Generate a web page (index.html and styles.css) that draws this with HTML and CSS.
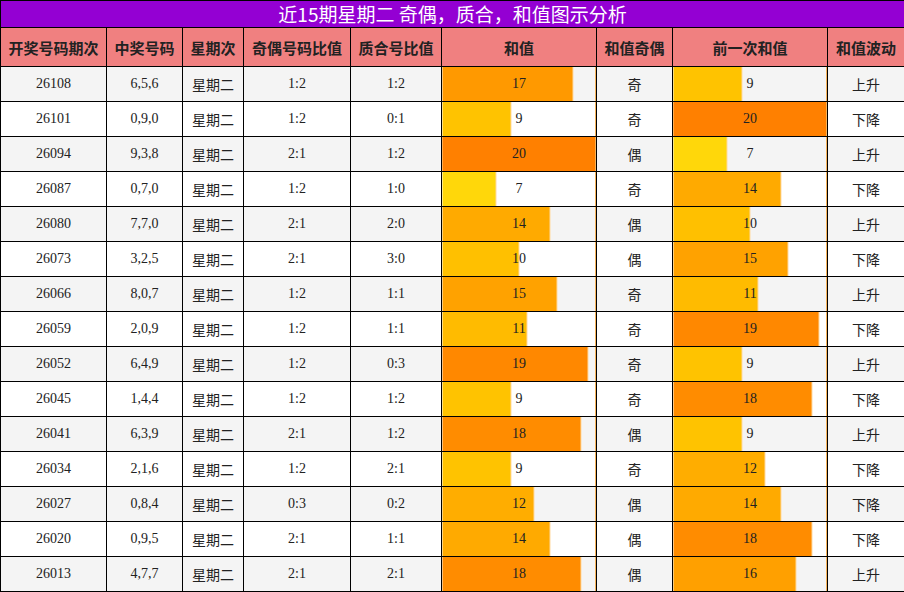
FILE: index.html
```html
<!DOCTYPE html>
<html lang="zh">
<head>
<meta charset="utf-8">
<title>近15期星期二 奇偶，质合，和值图示分析</title>
<link rel="stylesheet" href="styles.css">
</head>
<body>
<table class="grid">
  <colgroup>
    <col class="w1"><col class="w2"><col class="w3"><col class="w4"><col class="w5"><col class="w6"><col class="w7"><col class="w8"><col class="w9">
  </colgroup>
  <thead>
    <tr class="title-row"><th colspan="9" class="title">近15期星期二 奇偶，质合，和值图示分析</th></tr>
    <tr class="head-row">
      <th>开奖号码期次</th><th>中奖号码</th><th>星期次</th><th>奇偶号码比值</th><th>质合号比值</th><th>和值</th><th>和值奇偶</th><th>前一次和值</th><th>和值波动</th>
    </tr>
  </thead>
  <tbody>
    <tr><td>26108</td><td>6,5,6</td><td>星期二</td><td>1:2</td><td>1:2</td><td class="bar c17" style="--w:85%">17</td><td>奇</td><td class="bar c9" style="--w:45%">9</td><td>上升</td></tr>
    <tr><td>26101</td><td>0,9,0</td><td>星期二</td><td>1:2</td><td>0:1</td><td class="bar c9" style="--w:45%">9</td><td>奇</td><td class="bar c20" style="--w:100%">20</td><td>下降</td></tr>
    <tr><td>26094</td><td>9,3,8</td><td>星期二</td><td>2:1</td><td>1:2</td><td class="bar c20" style="--w:100%">20</td><td>偶</td><td class="bar c7" style="--w:35%">7</td><td>上升</td></tr>
    <tr><td>26087</td><td>0,7,0</td><td>星期二</td><td>1:2</td><td>1:0</td><td class="bar c7" style="--w:35%">7</td><td>奇</td><td class="bar c14" style="--w:70%">14</td><td>下降</td></tr>
    <tr><td>26080</td><td>7,7,0</td><td>星期二</td><td>2:1</td><td>2:0</td><td class="bar c14" style="--w:70%">14</td><td>偶</td><td class="bar c10" style="--w:50%">10</td><td>上升</td></tr>
    <tr><td>26073</td><td>3,2,5</td><td>星期二</td><td>2:1</td><td>3:0</td><td class="bar c10" style="--w:50%">10</td><td>偶</td><td class="bar c15" style="--w:75%">15</td><td>下降</td></tr>
    <tr><td>26066</td><td>8,0,7</td><td>星期二</td><td>1:2</td><td>1:1</td><td class="bar c15" style="--w:75%">15</td><td>奇</td><td class="bar c11" style="--w:55%">11</td><td>上升</td></tr>
    <tr><td>26059</td><td>2,0,9</td><td>星期二</td><td>1:2</td><td>1:1</td><td class="bar c11" style="--w:55%">11</td><td>奇</td><td class="bar c19" style="--w:95%">19</td><td>下降</td></tr>
    <tr><td>26052</td><td>6,4,9</td><td>星期二</td><td>1:2</td><td>0:3</td><td class="bar c19" style="--w:95%">19</td><td>奇</td><td class="bar c9" style="--w:45%">9</td><td>上升</td></tr>
    <tr><td>26045</td><td>1,4,4</td><td>星期二</td><td>1:2</td><td>1:2</td><td class="bar c9" style="--w:45%">9</td><td>奇</td><td class="bar c18" style="--w:90%">18</td><td>下降</td></tr>
    <tr><td>26041</td><td>6,3,9</td><td>星期二</td><td>2:1</td><td>1:2</td><td class="bar c18" style="--w:90%">18</td><td>偶</td><td class="bar c9" style="--w:45%">9</td><td>上升</td></tr>
    <tr><td>26034</td><td>2,1,6</td><td>星期二</td><td>1:2</td><td>2:1</td><td class="bar c9" style="--w:45%">9</td><td>奇</td><td class="bar c12" style="--w:60%">12</td><td>下降</td></tr>
    <tr><td>26027</td><td>0,8,4</td><td>星期二</td><td>0:3</td><td>0:2</td><td class="bar c12" style="--w:60%">12</td><td>偶</td><td class="bar c14" style="--w:70%">14</td><td>下降</td></tr>
    <tr><td>26020</td><td>0,9,5</td><td>星期二</td><td>2:1</td><td>1:1</td><td class="bar c14" style="--w:70%">14</td><td>偶</td><td class="bar c18" style="--w:90%">18</td><td>下降</td></tr>
    <tr><td>26013</td><td>4,7,7</td><td>星期二</td><td>2:1</td><td>2:1</td><td class="bar c18" style="--w:90%">18</td><td>偶</td><td class="bar c16" style="--w:80%">16</td><td>上升</td></tr>
  </tbody>
</table>
</body>
</html>
```
FILE: styles.css
```css
html, body {
  margin: 0;
  padding: 0;
  background: #ffffff;
}

.grid {
  width: 904px;
  border-collapse: collapse;
  table-layout: fixed;
  font-family: "Liberation Serif", "Noto Sans CJK SC", serif;
  font-size: 14px;
  color: #222222;
}

.w1 { width: 106px; }
.w2 { width: 76px; }
.w3 { width: 61px; }
.w4 { width: 107px; }
.w5 { width: 91px; }
.w6 { width: 155px; }
.w7 { width: 76px; }
.w8 { width: 155px; }
.w9 { width: 77px; }

.grid th,
.grid td {
  border: 1px solid #000000;
  padding: 0;
  text-align: center;
  vertical-align: middle;
}

.title-row { height: 27px; }

.title {
  background: #9400d3;
  color: #ffffff;
  font-family: "Noto Sans CJK SC", sans-serif;
  font-weight: normal;
  font-size: 19px;
  line-height: 26px;
  border-width: 2px 1px 1px 2px;
}

.head-row { height: 39px; }

.head-row th {
  background: #f08080;
  font-family: "Noto Sans CJK SC", sans-serif;
  font-size: 15px;
  font-weight: bold;
  color: #222222;
}

.grid tbody tr { height: 35px; }
.grid tbody tr:nth-child(odd) td { background-color: #f4f4f4; }
.grid tbody tr:nth-child(even) td { background-color: #ffffff; }

.grid tbody td.bar {
  background-image:
    linear-gradient(to right,
      var(--c) calc(var(--w) - 1px),
      var(--edge) calc(var(--w) - 1px),
      var(--edge) var(--w),
      transparent var(--w));
  box-shadow: inset -1px 0 0 #f7b35a;
  --edge: #ffd9a0;
}

.c7  { --c: #ffd70a; }
.c9  { --c: #ffc300; }
.c10 { --c: #ffc000; }
.c11 { --c: #ffbb00; }
.c12 { --c: #ffad00; }
.c14 { --c: #ffaa00; }
.c15 { --c: #ffa200; }
.c16 { --c: #ffa000; }
.c17 { --c: #ff9900; }
.c18 { --c: #ff8c00; }
.c19 { --c: #ff8800; }
.c20 { --c: #ff8000; }
```
